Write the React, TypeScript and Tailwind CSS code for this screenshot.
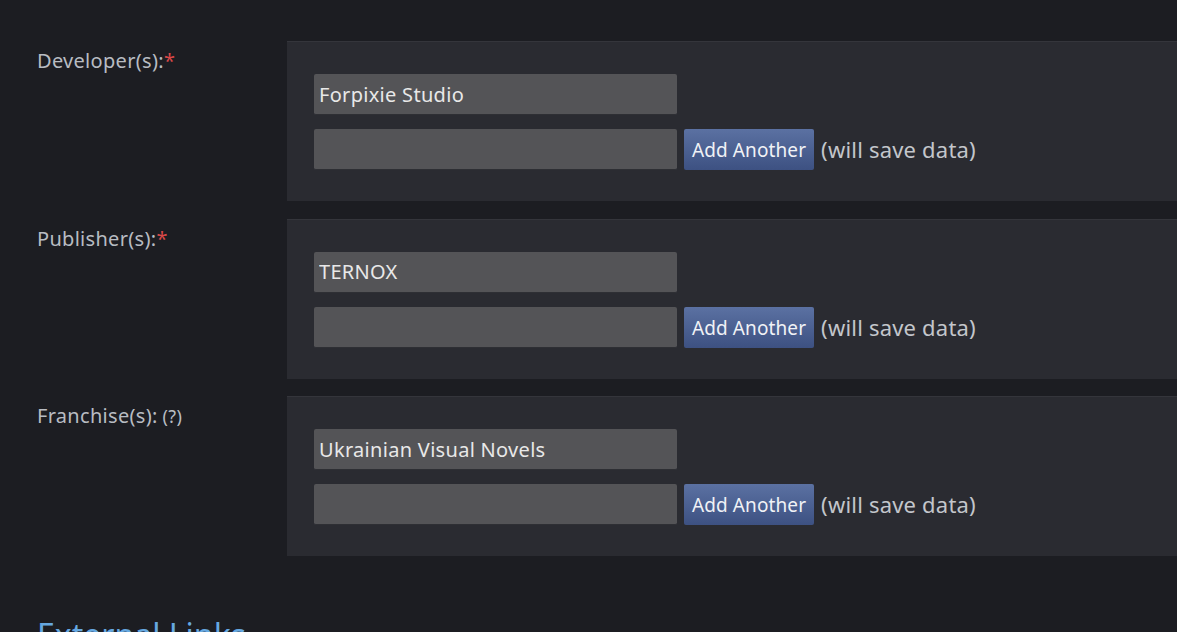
import React from 'react';

type Field = {
  label: string;
  suffix: 'required' | 'help';
  value: string;
};

const fields: Field[] = [
  { label: 'Developer(s):', suffix: 'required', value: 'Forpixie Studio' },
  { label: 'Publisher(s):', suffix: 'required', value: 'TERNOX' },
  { label: 'Franchise(s):', suffix: 'help', value: 'Ukrainian Visual Novels' },
];

function FieldRow({ field }: { field: Field }) {
  return (
    <div className="flex">
      <div className="w-[287px] shrink-0 pl-[37px] pt-[6px] text-[20px] leading-[28px] tracking-[0.3px] text-[#b8bcc2]">
        {field.label}
        {field.suffix === 'required' ? (
          <span className="text-[#d94848]">*</span>
        ) : (
          <span className="text-[18px]"> (?)</span>
        )}
      </div>
      <div className="h-[160px] flex-1 border-t border-[#34353b] bg-[#2a2b31] pl-[27px] pt-[32px]">
        <input
          readOnly
          value={field.value}
          className="block h-[41px] w-[363px] rounded-[2px] border-b border-[#2e2f34] bg-[#545457] px-[5px] text-[20px] tracking-[0.3px] text-[#e8e8e8] outline-none"
        />
        <div className="mt-[14px] flex items-center">
          <input
            readOnly
            value=""
            className="block h-[41px] w-[363px] rounded-[2px] border-b border-[#2e2f34] bg-[#545457] px-[5px] text-[20px] text-[#e8e8e8] outline-none"
          />
          <button className="ml-[7px] h-[41px] rounded-[2px] bg-gradient-to-b from-[#5b71a2] to-[#3d5182] px-[8px] pt-[2px] text-[19px] tracking-[0.1px] text-[#f0f2f6]">
            Add Another
          </button>
          <span className="ml-[7px] text-[22px] tracking-[0.2px] text-[#c3c6cb]">(will save data)</span>
        </div>
      </div>
    </div>
  );
}

export default function App() {
  return (
    <div
      className="h-[632px] w-[1177px] overflow-hidden bg-[#1c1d22]"
      style={{ fontFamily: '"Noto Sans", "Open Sans", sans-serif' }}
    >
      <div className="flex flex-col gap-[17.5px] pt-[41px]">
        {fields.map((f) => (
          <FieldRow key={f.label} field={f} />
        ))}
      </div>
      <h2 className="mt-[63px] pl-[37px] text-[32px] leading-none text-[#66a8e0]">External Links</h2>
    </div>
  );
}
